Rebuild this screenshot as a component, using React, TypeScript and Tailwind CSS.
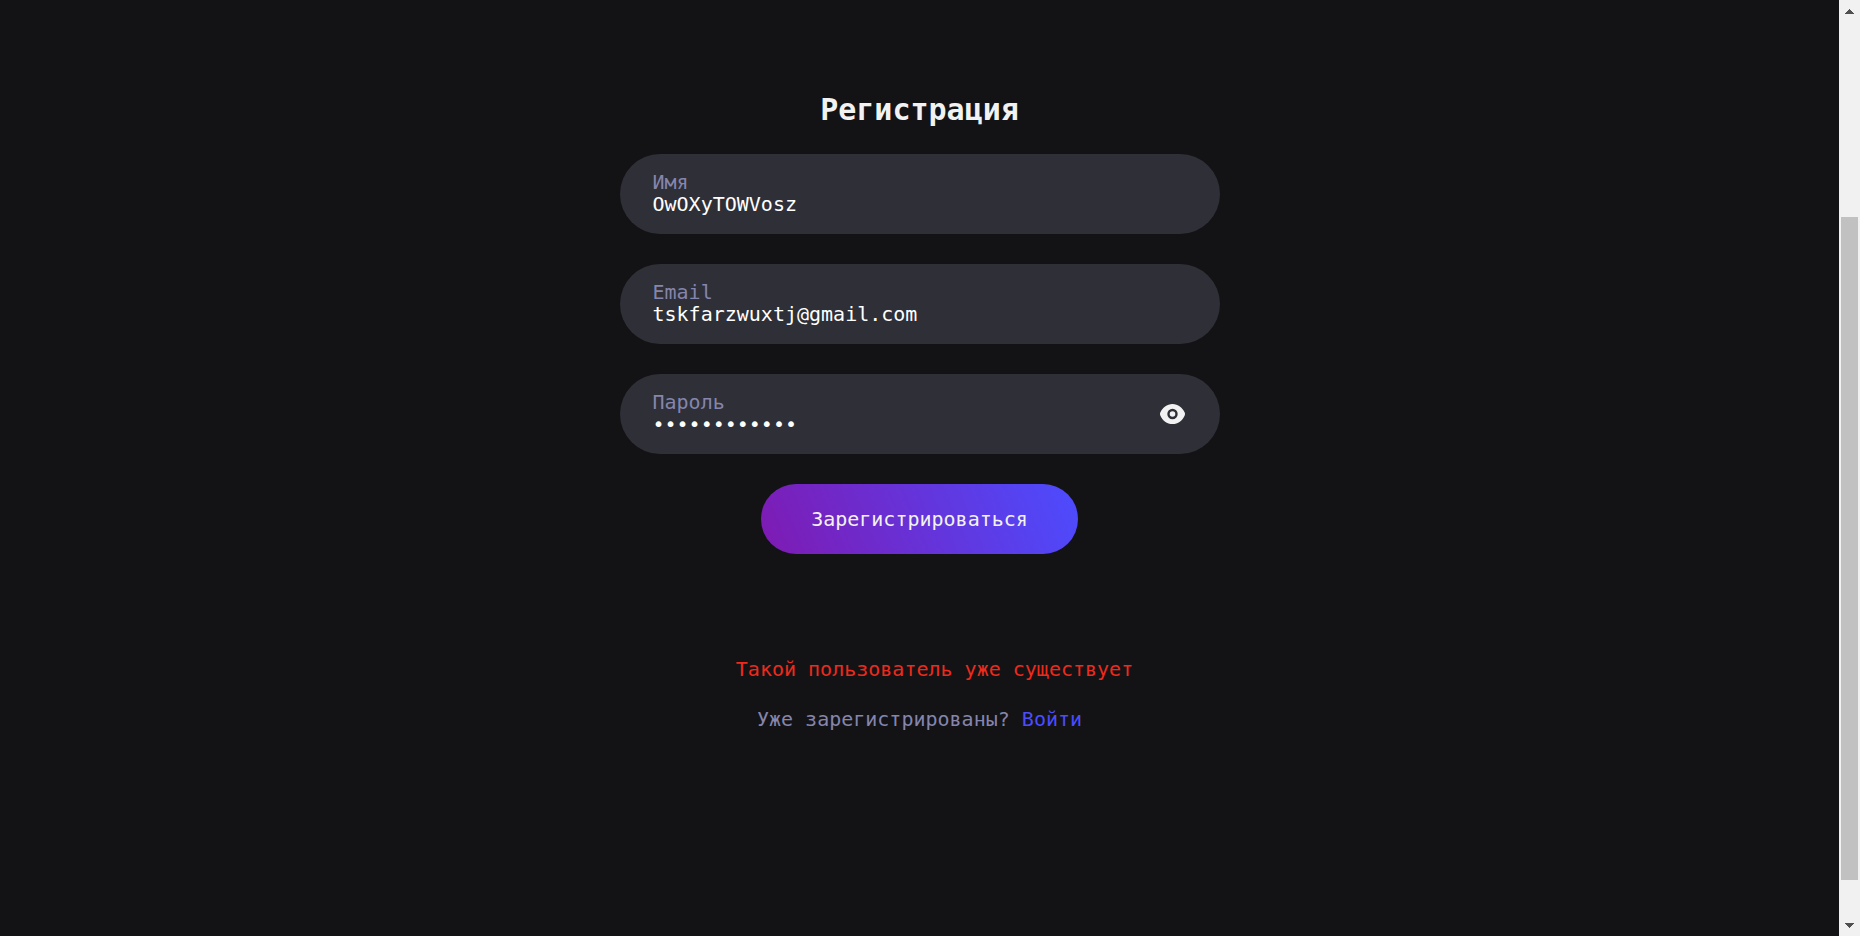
import { useState } from "react";
import type { InputHTMLAttributes, ReactNode } from "react";

type FieldProps = InputHTMLAttributes<HTMLInputElement> & {
  id: string;
  label: string;
  children?: ReactNode;
};

function Field({ id, label, children, ...input }: FieldProps) {
  return (
    <div className="flex h-20 w-full items-center rounded-[40px] bg-[#2f2f37] pr-[31px] pb-[2px] pl-[33px]">
      <div className="flex min-w-0 grow flex-col">
        <label htmlFor={id} className="h-[22px] leading-[22px] text-[#8585ad]">
          {label}
        </label>
        <input
          id={id}
          className="h-[22px] w-full bg-transparent leading-[22px] text-white outline-none"
          {...input}
        />
      </div>
      {children}
    </div>
  );
}

function ScrollRail() {
  return (
    <div className="flex w-[21px] shrink-0 flex-col items-center bg-[#f1f1f1]" aria-hidden="true">
      <svg className="mt-[9px] h-[5px] w-[9px]" viewBox="0 0 9 5" fill="#505050">
        <path d="M4 0h1v1h1v1h1v1h1v1h1v1H0V4h1V3h1V2h1V1h1z" />
      </svg>
      <div className="flex w-[17px] grow flex-col py-1">
        <div className="grow-[199]" />
        <div className="grow-[663] bg-[#c1c1c1]" />
        <div className="grow-[39]" />
      </div>
      <svg className="mb-[8px] h-[5px] w-[9px]" viewBox="0 0 9 5" fill="#505050">
        <path d="M0 0h9v1H8v1H7v1H6v1H5v1H4V4H3V3H2V2H1V1H0z" />
      </svg>
    </div>
  );
}

export default function App() {
  const [visible, setVisible] = useState(false);

  return (
    <div className="flex min-h-screen bg-[#131316] font-['DejaVu_Sans_Mono',monospace] text-[20px] leading-[26px]">
      <main className="flex min-w-0 grow flex-col items-center px-4 pt-[90px]">
        <form
          className="flex w-full max-w-[600px] flex-col items-center"
          onSubmit={(e) => e.preventDefault()}
        >
          <h1 className="text-[30px] leading-10 font-bold text-[#f2f2f2]">Регистрация</h1>
          <div className="mt-6 flex w-full flex-col gap-[30px]">
            <Field id="name" label="Имя" type="text" defaultValue="OwOXyTOWVosz" />
            <Field id="email" label="Email" type="email" defaultValue="tskfarzwuxtj@gmail.com" />
            <Field
              id="password"
              label="Пароль"
              type={visible ? "text" : "password"}
              defaultValue="qwertyqwerty"
            >
              <button
                type="button"
                aria-label="Показать пароль"
                className="mt-[2px] flex size-8 shrink-0 items-center justify-center"
                onClick={() => setVisible(!visible)}
              >
                <svg className="h-5 w-[25px]" viewBox="0 0 25 20">
                  <path
                    d="M12.5 0C7 0 2.4 3.6 0.3 8.6a3.4 3.4 0 0 0 0 2.8C2.4 16.4 7 20 12.5 20s10.1-3.6 12.2-8.6a3.4 3.4 0 0 0 0-2.8C22.6 3.6 18 0 12.5 0z"
                    fill="#f2f2f2"
                  />
                  <circle cx="12.5" cy="10" r="4" fill="none" stroke="#2f2f37" strokeWidth="2.4" />
                </svg>
              </button>
            </Field>
          </div>
          <button
            type="submit"
            className="mt-[30px] h-[70px] rounded-full bg-[linear-gradient(67deg,#7f1ab2,#4c4cff)] px-[50px] text-[#f2f2f2]"
          >
            Зарегистрироваться
          </button>
        </form>
        <p className="mt-[102px] pl-[30px] text-[#ed2a1c]" role="alert">
          Такой пользователь уже существует
        </p>
        <p className="mt-6 text-[#8585ad]">
          Уже зарегистрированы?{" "}
          <a href="#login" className="text-[#4c4cff]">
            Войти
          </a>
        </p>
      </main>
      <ScrollRail />
    </div>
  );
}
